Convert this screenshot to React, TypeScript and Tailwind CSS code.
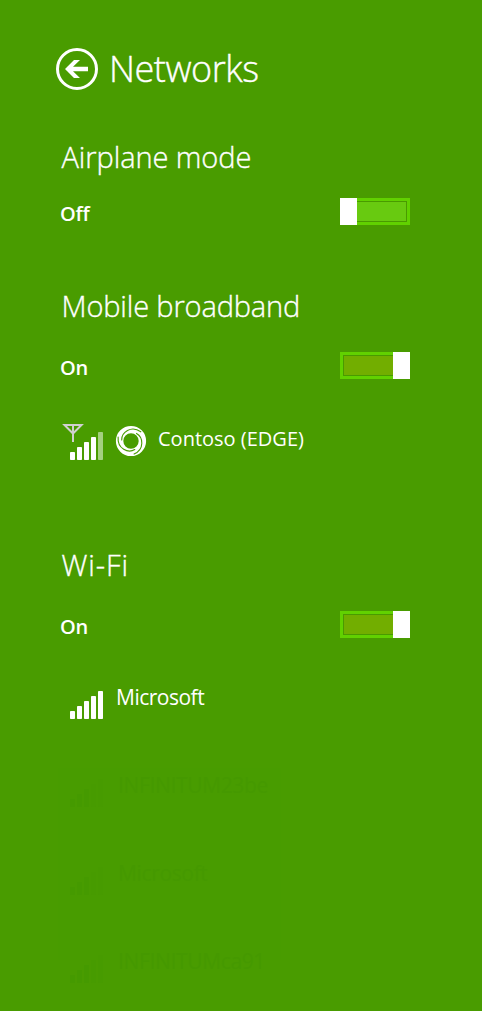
type LevelProps = { className?: string; fills: string[] };

const bars = [
  { x: 0, y: 20 },
  { x: 7, y: 15 },
  { x: 14, y: 10 },
  { x: 21, y: 5 },
  { x: 28, y: 0 },
];

function Signal({ className = "", fills }: LevelProps) {
  return (
    <svg className={`block shrink-0 ${className}`} width="33" height="28" viewBox="0 0 33 28">
      {bars.map((b, i) => (
        <rect key={b.x} x={b.x} y={b.y} width="5" height={28 - b.y} rx="0.8" fill={fills[i]} />
      ))}
    </svg>
  );
}

function Toggle({ on }: { on: boolean }) {
  return (
    <div className={`flex h-[27px] w-[70px] bg-[#61d100] ${on ? "flex-row-reverse" : ""}`}>
      <div className="w-[17px] bg-white" />
      <div className={`flex-1 py-[3px] ${on ? "pl-[3px]" : "pr-[3px]"}`}>
        <div
          className={`h-full border-y border-[#499b00] ${on ? "border-l bg-[#72ae00]" : "border-r bg-[#68ca10]"}`}
        />
      </div>
    </div>
  );
}

function Setting({ title, on, className, spacing }: { title: string; on: boolean; className: string; spacing: string }) {
  return (
    <section className={className}>
      <h2 className={`h-10 pl-[1.5px] text-[29px] leading-10 font-light whitespace-nowrap [-webkit-text-stroke:0.35px_white] ${spacing}`}>{title}</h2>
      <div className={`flex h-[29px] justify-between ${on ? "mt-[26px]" : "mt-[21px]"}`}>
        <span className="mt-[2px] h-7 text-[20px] leading-7 font-semibold tracking-[-0.2px]">{on ? "On" : "Off"}</span>
        <Toggle on={on} />
      </div>
    </section>
  );
}

const white = ["#fff", "#fff", "#fff", "#fff", "#fff"];
const mobile = ["#fff", "#fff", "#fff", "#fff", "#a4d080"];
const faded = ["#459a00", "#459a00", "#459a00", "#479b00", "#479b00"];

function FadedNetwork({ name }: { name: string }) {
  return (
    <li className="flex h-[88px] pl-3">
      <Signal className="mt-[8px]" fills={faded} />
      <span className="ml-[15px] h-7 text-[21px] leading-7 tracking-[-0.35px] text-[#459900]">{name}</span>
    </li>
  );
}

export default function App() {
  return (
    <main className="h-[1011px] w-[482px] overflow-hidden bg-[#499c00] pt-[44px] font-['Open_Sans','Noto_Sans',sans-serif] text-white">
      <header className="flex h-12 items-center pl-[56px]">
        <svg className="mt-[2px] block shrink-0" width="42" height="42" viewBox="0 0 42 42">
          <circle cx="21" cy="21" r="19.5" fill="none" stroke="#fff" strokeWidth="3" />
          <path d="M9 21 18 12H24L17 18.7H32V23.3H17L24 30H18Z" fill="#fff" />
        </svg>
        <h1 className="mt-[2px] ml-[11px] text-[36px] leading-[48px] font-light tracking-[-0.45px] [-webkit-text-stroke:0.4px_white]">
          Networks
        </h1>
      </header>
      <div className="w-[410px] pl-[60px]">
        <Setting title="Airplane mode" on={false} className="mt-[45px]" spacing="tracking-[-0.08px]" />
        <Setting title="Mobile broadband" on className="mt-[59px]" spacing="tracking-[-0.15px]" />
        <div className="mt-[42px] flex h-[38px] pl-[2px]">
          <svg className="block shrink-0" width="42" height="38" viewBox="0 0 42 38">
            <path d="M2.5 2H19.5L11 10.5ZM11 1V19" fill="none" stroke="#d0d0d0" strokeWidth="2" />
            {bars.map((b, i) => (
              <rect key={b.x} x={b.x + 8} y={b.y + 9} width="5" height={28 - b.y} rx="0.8" fill={mobile[i]} />
            ))}
          </svg>
          <svg className="mt-[2px] ml-[10.5px] block shrink-0" width="32" height="32" viewBox="-16 -16 32 32">
            <circle r="11.4" fill="none" stroke="#fff" strokeWidth="7.4" />
            {[0, 120, 240].map((a) => (
              <path
                key={a}
                transform={`rotate(${a})`}
                d="M-9.3 -1C-9.5 -8.5 0 -16 9.8 -9.2"
                fill="none"
                stroke="#499c00"
                strokeWidth="1.1"
                strokeLinecap="round"
              />
            ))}
          </svg>
          <span className="mt-[2px] ml-[11.5px] text-[20px] leading-7 whitespace-nowrap">Contoso (EDGE)</span>
        </div>
        <Setting title="Wi-Fi" on className="mt-[84px]" spacing="tracking-[0.9px]" />
        <div className="mt-[43px] flex h-[36px] pl-[10px]">
          <Signal className="mt-[8px]" fills={white} />
          <span className="ml-[13px] text-[21px] leading-7 tracking-[-0.5px]">Microsoft</span>
        </div>
      </div>
      <ul className="mt-[49px] ml-[58px] h-[192px] w-[223px] overflow-visible bg-[#489c00] pt-[3px]">
        <FadedNetwork name="INFINITUM23be" />
        <FadedNetwork name="Microsoft" />
        <FadedNetwork name="INFINITUMca91" />
      </ul>
    </main>
  );
}
